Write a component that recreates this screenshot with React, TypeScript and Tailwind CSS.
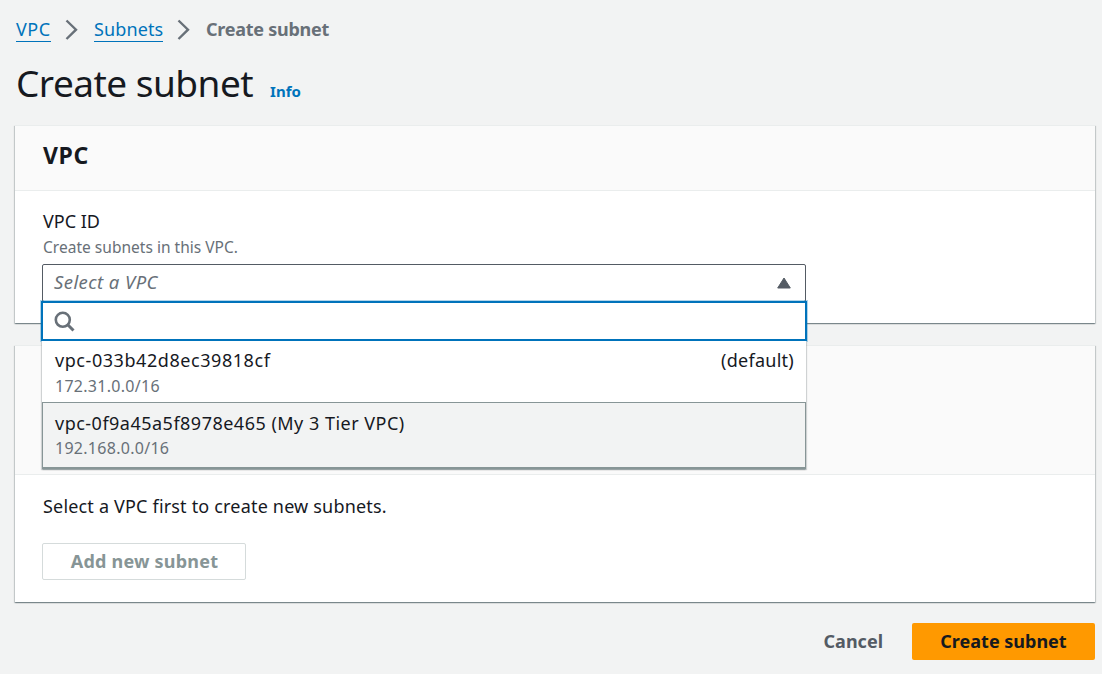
import { Fragment } from "react";

const crumbs = [
  { label: "VPC", className: "w-[35px] tracking-[0.5px]" },
  { label: "Subnets", className: "w-[69px] tracking-[0.12px]" },
];

const options = [
  { id: "vpc-033b42d8ec39818cf", cidr: "172.31.0.0/16", tag: "(default)" },
  { id: "vpc-0f9a45a5f8978e465 (My 3 Tier VPC)", cidr: "192.168.0.0/16", tag: "", active: true },
];

const panelShadow =
  "shadow-[0_1px_1px_0_rgba(0,28,36,0.3),1px_1px_1px_0_rgba(0,28,36,0.15),-1px_1px_1px_0_rgba(0,28,36,0.15)]";

function Chevron() {
  return (
    <svg width="14" height="22" viewBox="0 0 14 22" fill="none" stroke="#687078" strokeWidth="2.4">
      <path d="M1.5 1.5 L11 10.7 L1.5 20" />
    </svg>
  );
}

function Select() {
  return (
    <div className="relative w-[764px]">
      <div className="flex h-[38px] items-center justify-between rounded-[2px] border border-[#545b64] bg-white pl-[11px] pr-[14px]">
        <span className="pb-[3px] text-[18.5px] italic leading-6 tracking-[0.42px] text-[#687078]">Select a VPC</span>
        <svg width="14" height="12" viewBox="0 0 14 12" fill="#545b64" stroke="#545b64" strokeLinejoin="round">
          <path d="M7 1 L13.3 11 H0.7 Z" />
        </svg>
      </div>
      <div className="absolute -left-px top-[37px] w-[766px]">
        <div className="flex h-[40px] items-center border-2 border-[#0073bb] bg-white pl-[11px] shadow-[0_0_0_1px_rgba(0,115,187,0.3)]">
          <svg width="21" height="21" viewBox="0 0 21 21" fill="none" stroke="#687078">
            <circle cx="8.8" cy="8.8" r="7" strokeWidth="2.6" />
            <path d="M13.5 13.5 L19.5 19.5" strokeWidth="3" />
          </svg>
        </div>
        <div className="mx-px bg-white shadow-[0_1px_1px_0_rgba(0,28,36,0.15),1px_1px_1px_0_rgba(0,28,36,0.15),-1px_1px_1px_0_rgba(0,28,36,0.15)]">
          {options.map((o) => (
            <div
              key={o.id}
              className={
                o.active
                  ? "h-[67px] border border-b-2 border-[#879596] bg-[#f2f3f3] pl-[12px] pr-[10px] pt-[8px]"
                  : "h-[61px] pl-[13px] pr-[12px] pt-[7px]"
              }
            >
              <div className="flex justify-between text-[18px] leading-6 text-[#16191f]">
                <span className={o.active ? "tracking-[0.49px]" : "tracking-[0.56px]"}>{o.id}</span>
                <span className="tracking-[0.27px]">{o.tag}</span>
              </div>
              <div className={`text-[16px] leading-6 tracking-[0.28px] text-[#687078] ${o.active ? "mt-px" : "mt-[2px]"}`}>
                {o.cidr}
              </div>
            </div>
          ))}
        </div>
      </div>
    </div>
  );
}

export default function App() {
  return (
    <div className="h-[674px] w-[1102px] overflow-hidden whitespace-nowrap bg-[#f2f3f3] font-['Noto_Sans',sans-serif] text-[#16191f]">
      <nav className="flex h-[60px] items-center pb-[2px] pl-4 text-[18px] leading-6">
        {crumbs.map((c) => (
          <Fragment key={c.label}>
            <a href="#" className={`border-b border-[#0073bb] text-[#0073bb] ${c.className}`}>
              {c.label}
            </a>
            <span className="ml-[14px] mr-[15px] pt-px">
              <Chevron />
            </span>
          </Fragment>
        ))}
        <span className="font-bold tracking-[-0.26px] text-[#687078]">Create subnet</span>
      </nav>

      <header className="flex h-[65px] items-baseline pl-4">
        <h1 className="text-[37px] leading-[46px] tracking-[-0.52px]">Create subnet</h1>
        <a href="#" className="ml-[17px] text-[15px] font-bold text-[#0073bb]">
          Info
        </a>
      </header>

      <section className={`ml-[15px] h-[198px] w-[1080px] bg-white ${panelShadow}`}>
        <div className="flex h-[66px] items-center border-b border-t border-[#eaeded] bg-[#fafafa] pb-[6px] pl-[28px]">
          <h2 className="text-[23px] font-bold leading-7 tracking-[0.6px]">VPC</h2>
        </div>
        <div className="pl-[28px] pt-[18px]">
          <div className="text-[18px] leading-6">VPC ID</div>
          <div className="mt-[2px] text-[15.5px] leading-6 tracking-[0.02px] text-[#687078]">Create subnets in this VPC.</div>
          <div className="-ml-px mt-[5px]">
            <Select />
          </div>
        </div>
      </section>

      <section className={`ml-[15px] mt-[22px] h-[257px] w-[1080px] bg-white ${panelShadow}`}>
        <div className="h-[130px] border-b border-t border-[#eaeded] bg-[#fafafa]" />
        <div className="pl-[28px] pt-[19px]">
          <p className="text-[18px] leading-6 tracking-[0.18px]">Select a VPC first to create new subnets.</p>
          <button className="-ml-px mt-[25px] flex h-[37px] w-[204px] items-center justify-center rounded-[2px] border border-[#d5dbdb] bg-white pl-px text-[18px] font-bold tracking-[0.22px] text-[#879596]">
            Add new subnet
          </button>
        </div>
      </section>

      <footer className="mt-[21px] flex items-center justify-end pr-[7px] text-[18px] font-bold">
        <button className="mr-[29px] text-[#545b64]">Cancel</button>
        <button className="h-[37px] w-[183px] rounded-[2px] bg-[#ff9900] text-[#16191f]">Create subnet</button>
      </footer>
    </div>
  );
}
